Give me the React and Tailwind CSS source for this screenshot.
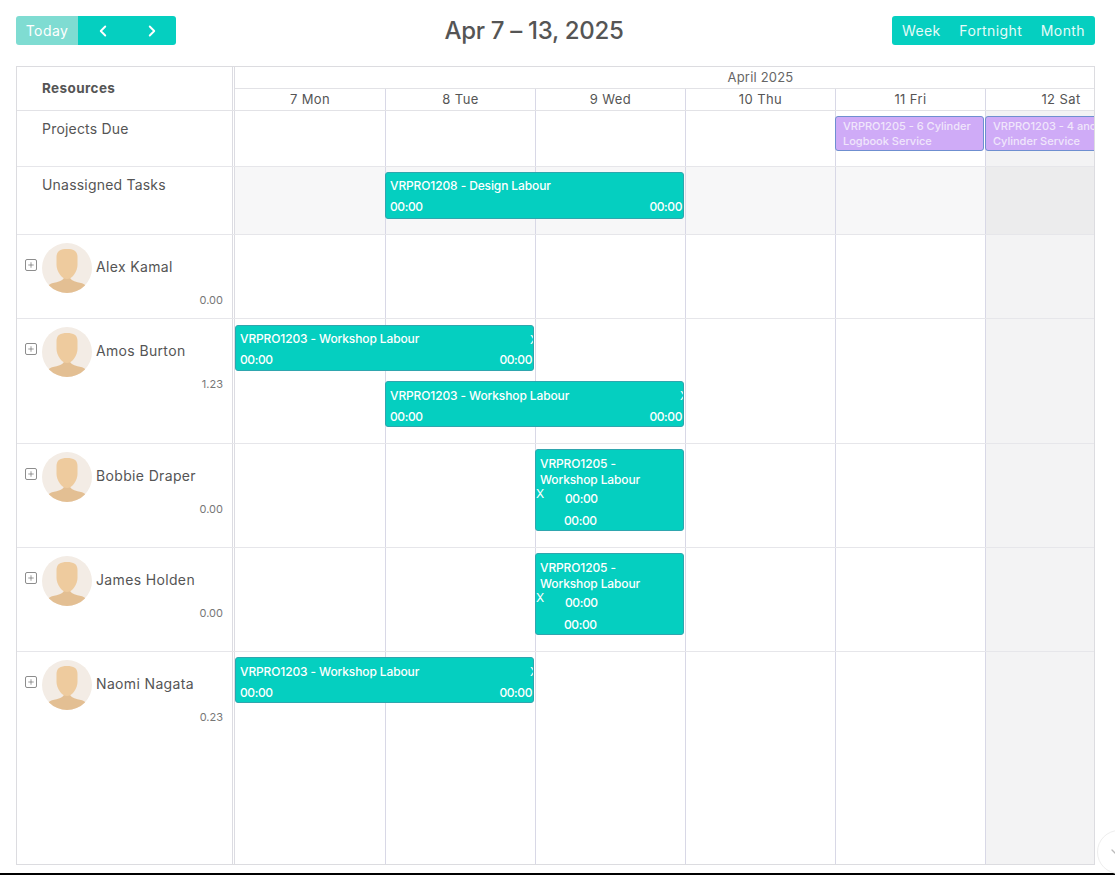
import { ChevronLeft, ChevronRight, ChevronDown, Plus } from 'lucide-react';

const DAYS = ['7 Mon', '8 Tue', '9 Wed', '10 Thu', '11 Fri', '12 Sat'];
const COLS = 'grid-cols-[151px_150px_150px_150px_150px_150px]';

const RESOURCES = [
  {
    name: 'Alex Kamal',
    hours: '0.00',
    height: 'h-[84px]',
    top: 'pt-[6px]',
    events: [],
  },
  {
    name: 'Amos Burton',
    hours: '1.23',
    height: 'h-[125px]',
    top: 'pt-[6px]',
    events: [
      { title: 'VRPRO1203 - Workshop Labour', col: 'col-start-1 col-span-2 pr-[2px]', first: true },
      { title: 'VRPRO1203 - Workshop Labour', col: 'col-start-2 col-span-2 -ml-[1px] pr-[2px]' },
    ],
  },
  {
    name: 'Bobbie Draper',
    hours: '0.00',
    height: 'h-[104px]',
    top: 'pt-[5px]',
    events: [{ title: 'VRPRO1205 - Workshop Labour', col: 'col-start-3 col-span-1 -ml-[1px] pr-[2px]', narrow: true }],
  },
  {
    name: 'James Holden',
    hours: '0.00',
    height: 'h-[104px]',
    top: 'pt-[5px]',
    events: [{ title: 'VRPRO1205 - Workshop Labour', col: 'col-start-3 col-span-1 -ml-[1px] pr-[2px]', narrow: true }],
  },
  {
    name: 'Naomi Nagata',
    hours: '0.23',
    height: 'flex-1',
    top: 'pt-[5px]',
    events: [{ title: 'VRPRO1203 - Workshop Labour', col: 'col-start-1 col-span-2 pr-[2px]' }],
  },
];

function Avatar() {
  return (
    <svg viewBox="0 0 50 50" className="w-[50px] h-[50px] shrink-0">
      <defs>
        <clipPath id="avatar-clip">
          <circle cx="25" cy="25" r="25" />
        </clipPath>
      </defs>
      <g clipPath="url(#avatar-clip)">
        <rect width="50" height="50" fill="#f3ece5" />
        <path d="M5 50c0-6 1-9 6-10 5-1 9-2 11-5h6c2 3 6 4 11 5 5 1 6 4 6 10z" fill="#e3bf93" />
        <path d="M14.500 14c0-6 4-8 10.500-8s10.500 2 10.500 8v8c0 6-5 14-10.500 14s-10.500-8-10.500-14z" fill="#eecb9e" />
      </g>
    </svg>
  );
}

function DayLines({ shaded }) {
  return (
    <div className={`absolute inset-0 grid ${COLS}`}>
      {DAYS.map((d, i) => (
        <div
          key={d}
          className={`border-r border-[#d8d8e6] last:border-r-0 ${
            i === 5 ? (shaded ? 'bg-[#ececed]' : 'bg-[#f3f3f4]') : shaded ? 'bg-[#f7f7f8]' : ''
          }`}
        />
      ))}
    </div>
  );
}

function NarrowEvent({ title }) {
  return (
    <div className="relative h-[82px] overflow-hidden rounded-[3px] border border-[#2fa6ae] bg-[#05cfc0] pl-1 pt-[6px] text-xs font-medium leading-4 tracking-[-0.12px] text-white">
      <div className="pr-8">{title}</div>
      <div className="mt-[1px] flex h-[21px]">
        <span className="-ml-1 -mt-[3px] w-[29px] font-normal">X</span>
        <span className="mt-[2px] tracking-[-0.4px]">00:00</span>
      </div>
      <div className="pl-[24px] leading-[21px] tracking-[-0.4px]">00:00</div>
    </div>
  );
}

function Event({ title, inResource, first }) {
  return (
    <div className={`relative overflow-hidden rounded-[3px] border border-[#2fa6ae] bg-[#05cfc0] px-1 text-xs font-medium leading-4 tracking-[-0.12px] text-white ${inResource ? 'h-[46px]' : 'h-[47px]'} ${inResource && !first ? 'pt-[6px]' : 'pt-[5px]'}`}>
      <div className="truncate">{title}</div>
      {inResource && <span className="absolute right-[-5px] top-[6px] font-normal">X</span>}
      <div className="mt-[5px] flex justify-between tracking-[-0.4px]">
        <span>00:00</span>
        <span className="-mr-[3px]">00:00</span>
      </div>
    </div>
  );
}

function ProjectEvent({ title }) {
  return (
    <div className="h-[35px] overflow-hidden rounded-[3px] border border-[#6f8fd0] bg-[#cfabf7] px-[7px] pt-[2px] text-[11px] font-medium leading-[15px] text-[#f0e6fb]">
      {title}
    </div>
  );
}

function ResourceRow({ name, hours, height, top, events }) {
  return (
    <div className={`flex ${height} border-b border-[#e6e6ea] last:border-b-0`}>
      <div className="w-[216px] shrink-0 border-r border-[#dcdce2] pl-[8px] pt-[8px]">
        <div className="flex items-start">
          <span className="mt-[16px] mr-[5px] flex h-3 w-3 items-center justify-center rounded-[2px] border border-[#8d8d8d]">
            <Plus className="h-2 w-2 text-[#666]" strokeWidth={2} />
          </span>
          <Avatar />
          <span className="ml-1 mt-[14px] text-sm leading-5 tracking-[0.35px] text-[#555]">{name}</span>
        </div>
        <div className="mt-[-1px] pr-[9px] text-right text-[11px] leading-4 text-[#777]">{hours}</div>
      </div>
      <div className="relative ml-[1px] w-[860px] overflow-hidden border-l border-[#dcdce2]">
        <DayLines />
        <div className={`relative grid ${COLS} gap-y-[10px] ${top}`}>
          {events.map((e, i) => (
            <div key={i} className={e.col}>
              {e.narrow ? <NarrowEvent title={e.title} /> : <Event title={e.title} first={e.first} inResource />}
            </div>
          ))}
        </div>
      </div>
    </div>
  );
}

export default function App() {
  return (
    <div className="relative flex h-[875px] flex-col overflow-hidden bg-white font-['Inter','Liberation_Sans',sans-serif]">
      {/* Toolbar */}
      <div className="ml-4 flex h-[66px] w-[1079px] items-start justify-between pt-4">
        <div className="flex">
          <button className="flex h-[29px] w-[62px] items-center justify-center rounded-l-[3px] bg-[#7fdcd2] text-sm tracking-[0.4px] text-white">
            Today
          </button>
          <button className="flex h-[29px] w-[49px] items-center justify-center bg-[#05cfc0] text-white">
            <ChevronLeft className="h-[18px] w-[18px]" strokeWidth={2.5} />
          </button>
          <button className="flex h-[29px] w-[49px] items-center justify-center rounded-r-[3px] bg-[#05cfc0] text-white">
            <ChevronRight className="h-[18px] w-[18px]" strokeWidth={2.5} />
          </button>
        </div>
        <h1 className="text-2xl font-medium leading-[29px] tracking-[-0.3px] text-[#555]">Apr 7 – 13, 2025</h1>
        <div className="flex h-[29px] w-[203px] items-center justify-between rounded-[3px] bg-[#05cfc0] px-[10px] text-sm tracking-[0.4px] text-[#e6fbf9]">
          <span>Week</span>
          <span>Fortnight</span>
          <span>Month</span>
        </div>
      </div>

      {/* Scheduler */}
      <div className="ml-4 flex h-[799px] w-[1079px] flex-col border border-[#dcdce0]">
        {/* Header */}
        <div className="flex h-[44px] border-b border-[#e2e2e6]">
          <div className="w-[216px] shrink-0 border-r border-[#dcdce2] pl-[25px] pt-[11px] text-[13.500px] font-bold leading-5 tracking-[0.4px] text-[#555]">
            Resources
          </div>
          <div className="ml-[1px] flex w-[860px] flex-col overflow-hidden border-l border-[#dcdce2]">
            <div className="h-[22px] w-[1051px] shrink-0 border-b border-[#e2e2e6] text-center text-[13px] leading-[20px] tracking-[0.2px] text-[#666]">
              April 2025
            </div>
            <div className={`grid flex-1 ${COLS}`}>
              {DAYS.map((d) => (
                <div key={d} className="border-r border-[#d8d8e6] text-center text-[13px] leading-[21px] tracking-[0.4px] text-[#555] last:border-r-0">
                  {d}
                </div>
              ))}
            </div>
          </div>
        </div>

        {/* Projects Due */}
        <div className="flex h-[56px] border-b border-[#e6e6ea]">
          <div className="w-[216px] shrink-0 border-r border-[#dcdce2] pl-[25px] pt-[8px] text-sm leading-5 tracking-[0.2px] text-[#555]">
            Projects Due
          </div>
          <div className="relative ml-[1px] w-[860px] overflow-hidden border-l border-[#dcdce2]">
            <DayLines />
            <div className={`relative grid ${COLS} pt-[5px]`}>
              <div className="col-start-5 -ml-[1px] pr-[2px]">
                <ProjectEvent title="VRPRO1205 - 6 Cylinder Logbook Service" />
              </div>
              <div className="col-start-6 -ml-[1px] pr-[2px]">
                <ProjectEvent title="VRPRO1203 - 4 and Cylinder Service" />
              </div>
            </div>
          </div>
        </div>

        {/* Unassigned Tasks */}
        <div className="flex h-[68px] border-b border-[#e6e6ea]">
          <div className="w-[216px] shrink-0 border-r border-[#dcdce2] pl-[25px] pt-[8px] text-sm leading-5 tracking-[0.2px] text-[#555]">
            Unassigned Tasks
          </div>
          <div className="relative ml-[1px] w-[860px] overflow-hidden border-l border-[#dcdce2]">
            <DayLines shaded />
            <div className={`relative grid ${COLS} pt-[5px]`}>
              <div className="col-start-2 col-span-2 -ml-[1px] pr-[2px]">
                <Event title="VRPRO1208 - Design Labour" />
              </div>
            </div>
          </div>
        </div>

        {RESOURCES.map((r) => (
          <ResourceRow key={r.name} {...r} />
        ))}
      </div>

      {/* Scroll to bottom button */}
      <div className="absolute bottom-[1px] right-[-26px] flex h-11 w-11 items-center rounded-full border border-[#eeeeee] bg-white pl-[10px]">
        <ChevronDown className="h-4 w-4 text-[#bbb]" />
      </div>

      <div className="mt-auto h-[2px] bg-black" />
    </div>
  );
}
